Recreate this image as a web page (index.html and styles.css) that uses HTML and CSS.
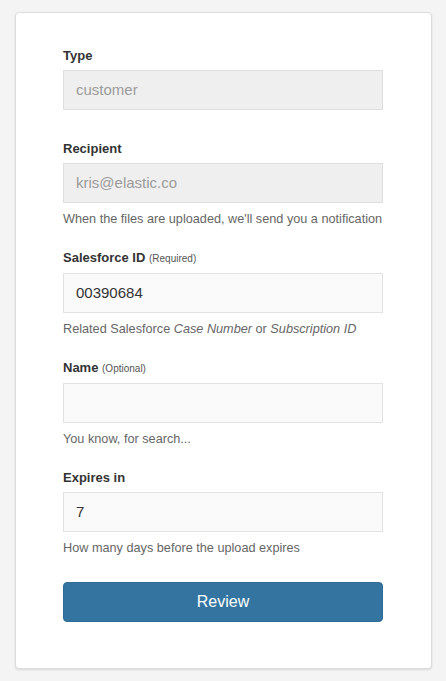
FILE: index.html
```html
<!DOCTYPE html>
<html lang="en">
<head>
<meta charset="utf-8">
<title>Upload</title>
<link rel="stylesheet" href="styles.css">
</head>
<body>
<div class="page">
  <form class="card">
    <div class="field field-plain">
      <label class="label">Type</label>
      <div class="input input-disabled">customer</div>
    </div>
    <div class="field">
      <label class="label">Recipient</label>
      <div class="input input-disabled">kris@elastic.co</div>
      <div class="help">When the files are uploaded, we'll send you a notification</div>
    </div>
    <div class="field">
      <label class="label">Salesforce ID <span class="note">(Required)</span></label>
      <div class="input">00390684</div>
      <div class="help">Related Salesforce <em>Case Number</em> or <em>Subscription ID</em></div>
    </div>
    <div class="field">
      <label class="label">Name <span class="note">(Optional)</span></label>
      <div class="input"></div>
      <div class="help">You know, for search...</div>
    </div>
    <div class="field field-last">
      <label class="label">Expires in</label>
      <div class="input">7</div>
      <div class="help">How many days before the upload expires</div>
    </div>
    <button type="button" class="button">Review</button>
  </form>
</div>
</body>
</html>
```
FILE: styles.css
```css
html, body {
  margin: 0;
  padding: 0;
  background: #f4f4f4;
}
body {
  font-family: "Liberation Sans", Arial, sans-serif;
  color: #333;
}
.page {
  padding: 12px 14px 13px 15px;
}
.card {
  box-sizing: border-box;
  width: 417px;
  background: #fff;
  border: 1px solid #dcdcdc;
  border-radius: 4px;
  box-shadow: 0 1px 2px rgba(0,0,0,0.12);
  padding: 34px 48px 46px 47px;
  display: flex;
  flex-direction: column;
}
.field {
  display: flex;
  flex-direction: column;
  margin-bottom: 21px;
}
.field-plain {
  margin-bottom: 30px;
}
.field-last {
  margin-bottom: 25px;
}
.label {
  font-size: 13px;
  font-weight: bold;
  line-height: 18px;
  color: #333;
  margin-bottom: 5px;
}
.note {
  font-size: 10px;
  font-weight: normal;
  color: #555;
}
.input {
  box-sizing: border-box;
  height: 40px;
  border: 1px solid #e2e2e2;
  background: #fafafa;
  padding: 0 12px;
  font-size: 15px;
  line-height: 38px;
  color: #333;
}
.input-disabled {
  background: #efefef;
  border-color: #dedede;
  color: #9b9b9b;
}
.help {
  margin-top: 7px;
  font-size: 12.7px;
  line-height: 18px;
  color: #666;
  white-space: nowrap;
}
.button {
  box-sizing: border-box;
  height: 40px;
  width: 100%;
  border: 1px solid #2f6b93;
  border-radius: 4px;
  background: #3474a0;
  color: #fff;
  font-family: "Liberation Sans", Arial, sans-serif;
  font-size: 16px;
  padding: 0;
}
```
